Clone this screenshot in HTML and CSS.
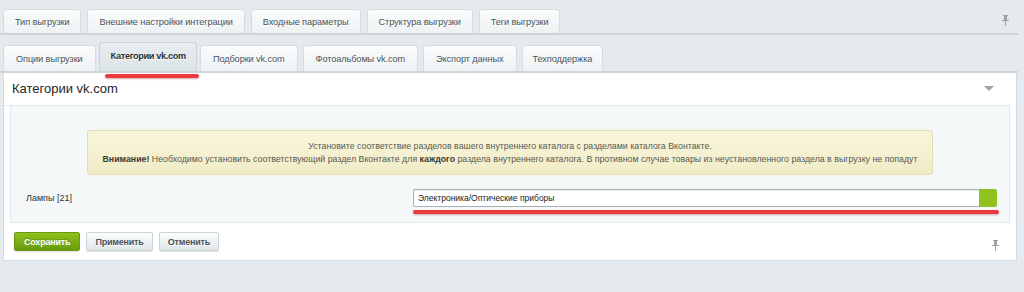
FILE: index.html
```html
<!DOCTYPE html>
<html lang="ru">
<head>
  <meta charset="UTF-8" />
  <title>Категории vk.com</title>
  <link rel="stylesheet" href="styles.css">
</head>
<body>

<div class="page">
  <div class="tabs tabs-top">
    <span class="tab">Тип выгрузки</span>
    <span class="tab">Внешние настройки интеграции</span>
    <span class="tab">Входные параметры</span>
    <span class="tab">Структура выгрузки</span>
    <span class="tab">Теги выгрузки</span>
    <span class="pin pin-top">
      <svg width="7" height="11" viewBox="0 0 7 11"><path d="M1 0h5v1H5v4h2v1H4v5H3V6H0V5h2V1H1z" fill="#9aa3a8"/></svg>
    </span>
  </div>

  <div class="tabs tabs-sub">
    <span class="tab">Опции выгрузки</span>
    <span class="tab active">Категории vk.com<i class="mark mark-tab"></i></span>
    <span class="tab">Подборки vk.com</span>
    <span class="tab">Фотоальбомы vk.com</span>
    <span class="tab">Экспорт данных</span>
    <span class="tab">Техподдержка</span>
  </div>

  <div class="panel">
    <div class="panel-head">
      <h2>Категории vk.com</h2>
      <span class="arrow"></span>
    </div>

    <div class="panel-body">
      <div class="notice">
        Установите соответствие разделов вашего внутреннего каталога с разделами каталога Вконтакте.<br>
        <b>Внимание!</b> Необходимо установить соответствующий раздел Вконтакте для <b>каждого</b> раздела внутреннего каталога. В противном случае товары из неустановленного раздела в выгрузку не попадут
      </div>

      <div class="field-row">
        <div class="field-label">Лампы [21]</div>
        <div class="field-input">
          <div class="select">
            <span class="select-text">Электроника/Оптические приборы</span>
            <span class="select-btn"></span>
          </div>
          <i class="mark mark-input"></i>
        </div>
      </div>
    </div>

    <div class="panel-foot">
      <button class="btn btn-save">Сохранить</button>
      <button class="btn">Применить</button>
      <button class="btn">Отменить</button>
      <span class="pin pin-foot">
        <svg width="7" height="11" viewBox="0 0 7 11"><path d="M1 0h5v1H5v4h2v1H4v5H3V6H0V5h2V1H1z" fill="#9aa3a8"/></svg>
      </span>
    </div>
  </div>
</div>

</body>
</html>
```

FILE: styles.css
```css
* {
  box-sizing: border-box;
}

body, html {
  margin: 0;
  padding: 0;
  height: 100%;
  background-color: #e4eaed;
  font-family: "Liberation Sans", Arial, sans-serif;
  color: #333;
}

.page {
  width: 1018px;
  padding-left: 3px;
}

.tabs {
  display: flex;
  align-items: flex-end;
  gap: 6px;
}

.tabs-top {
  padding-top: 9px;
  border-bottom: 2px solid #cdd5d9;
  margin-left: -3px;
  padding-left: 3px;
}

.tabs-sub {
  padding-top: 7px;
  border-bottom: 2px solid #cdd5d9;
  margin-left: -3px;
  padding-left: 3px;
  gap: 5px;
}

.tab {
  position: relative;
  height: 24px;
  line-height: 24px;
  padding: 0 11px;
  font-size: 9.2px;
  letter-spacing: -0.1px;
  color: #46525a;
  background: linear-gradient(#fbfcfc, #eef2f3);
  border: 1px solid #d6dde0;
  border-bottom: none;
  border-radius: 3px 3px 0 0;
  white-space: nowrap;
  text-shadow: 0 1px 0 #fff;
}

.tabs-sub .tab {
  height: 26px;
  line-height: 26px;
  padding: 0 12px;
}

.tabs-sub .tab.active {
  height: 29px;
  line-height: 27px;
  padding: 0 10px 0 11px;
  margin: 0 -2px;
  letter-spacing: -0.35px;
  font-weight: bold;
  color: #2b3338;
  background: linear-gradient(#e7edf0, #dce4e7);
  border-color: #cbd4d8;
}

.tabs-sub .tab:last-child {
  padding: 0 10px;
}

.mark {
  position: absolute;
  display: block;
  height: 4px;
  background-color: #ec3a40;
  border-radius: 2px;
  box-shadow: 0 1px 2px rgba(120, 20, 20, 0.35);
}

.mark-tab {
  left: 5px;
  right: -3px;
  top: 31px;
}

.pin {
  display: flex;
  align-items: center;
}

.pin-top {
  margin-left: auto;
  margin-right: 9px;
  align-self: center;
  margin-top: -2px;
}

.panel {
  background-color: #fff;
  border: 1px solid #d5dde0;
  border-top: none;
  width: 1014px;
  padding-bottom: 9px;
}

.panel-head {
  display: flex;
  align-items: center;
  justify-content: space-between;
  height: 33px;
  padding: 0 12px 0 8px;
  border-bottom: 1px solid #e3e8ea;
  margin: 0 6px 0 0;
}

.panel-head h2 {
  margin: 0;
  font-size: 13px;
  font-weight: normal;
  color: #1f2528;
  margin-top: -2px;
}

.arrow {
  width: 0;
  height: 0;
  border-left: 5px solid transparent;
  border-right: 5px solid transparent;
  border-top: 5px solid #9ba3a7;
  margin-right: 4px;
  margin-top: -2px;
}

.panel-body {
  margin: 0 6px;
  background-color: #f5f8f9;
  border: 1px solid #e2e8ea;
  border-top: none;
  padding: 24px 0 15px;
}

.notice {
  width: 846px;
  margin: 0 auto;
  padding: 9px 8px 8px;
  background: linear-gradient(#f8f5dc, #f1ecc6);
  border: 1px solid #e3dcae;
  border-radius: 3px;
  font-size: 8.8px;
  line-height: 13px;
  color: #5a5a50;
  text-align: center;
  white-space: nowrap;
}

.notice b {
  color: #3b3b33;
}

.field-row {
  display: flex;
  align-items: center;
  margin-top: 14px;
}

.field-label {
  width: 402px;
  padding-left: 15px;
  font-size: 9px;
  color: #333;
}

.field-input {
  position: relative;
  width: 584px;
}

.select {
  display: flex;
  height: 18px;
  border: 1px solid #a8b2b6;
  border-right: none;
  border-radius: 2px;
  background-color: #fff;
  box-shadow: inset 0 1px 1px rgba(0, 0, 0, 0.08);
}

.select-text {
  flex: 1;
  font-size: 8.5px;
  line-height: 16px;
  padding-left: 4px;
  color: #222;
}

.select-btn {
  width: 18px;
  margin-top: -1px;
  height: 18px;
  background-color: #8fc21c;
  border-radius: 0 3px 3px 0;
}

.mark-input {
  left: 0;
  right: -2px;
  top: 21px;
}

.panel-foot {
  display: flex;
  align-items: center;
  gap: 6px;
  padding: 9px 17px 0 10px;
}

.btn {
  height: 19px;
  padding: 0 8px;
  font-family: "Liberation Sans", Arial, sans-serif;
  font-size: 9px;
  font-weight: bold;
  letter-spacing: -0.2px;
  color: #4c5358;
  background: linear-gradient(#fdfefe, #dfe6e9);
  border: 1px solid #ccd4d7;
  border-radius: 2px;
  box-shadow: 0 1px 1px rgba(0, 0, 0, 0.12);
  text-shadow: 0 1px 0 #fff;
}

.btn-save {
  padding: 0 9px;
  color: #fff;
  background: linear-gradient(#8fc21b, #679c0b);
  border-color: #6a9a14;
  text-shadow: 0 -1px 0 rgba(0, 0, 0, 0.2);
}

.pin-foot {
  margin-left: auto;
  margin-top: 8px;
}
```
